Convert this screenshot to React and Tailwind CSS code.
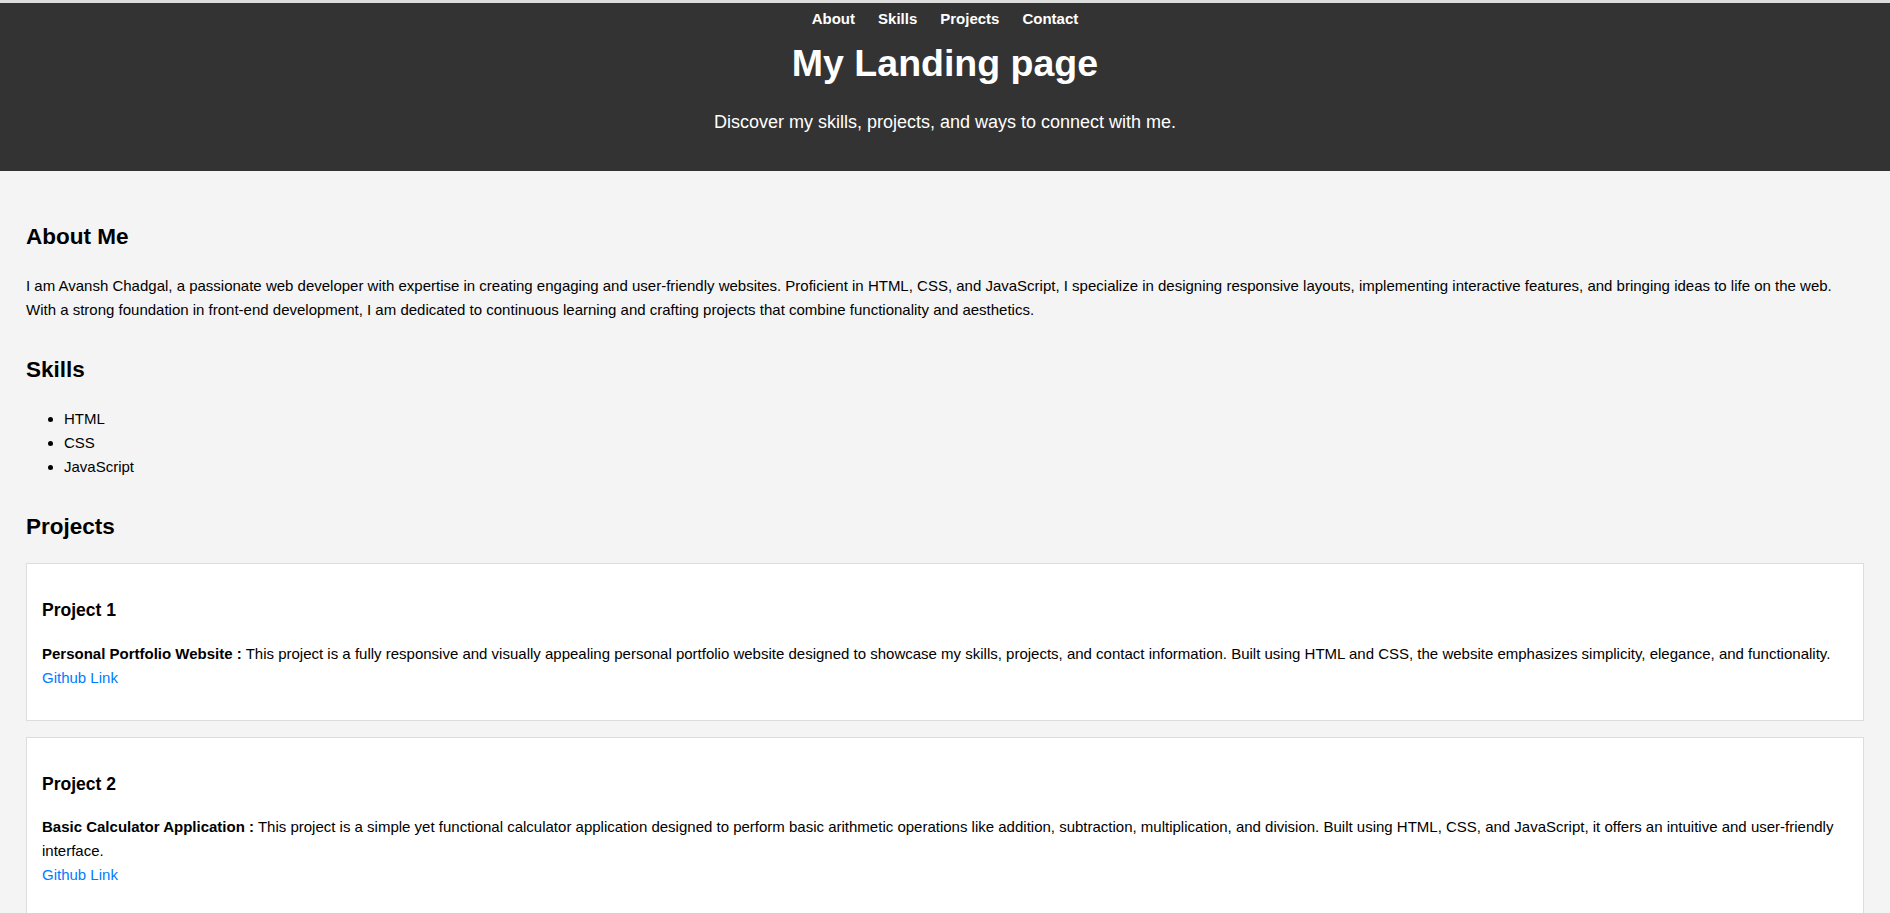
import React from 'react';

const navLinks = ['About', 'Skills', 'Projects', 'Contact'];

const skills = ['HTML', 'CSS', 'JavaScript'];

const projects = [
  {
    title: 'Project 1',
    name: 'Personal Portfolio Website',
    text: 'This project is a fully responsive and visually appealing personal portfolio website designed to showcase my skills, projects, and contact information. Built using HTML and CSS, the website emphasizes simplicity, elegance, and functionality.',
  },
  {
    title: 'Project 2',
    name: 'Basic Calculator Application',
    text: 'This project is a simple yet functional calculator application designed to perform basic arithmetic operations like addition, subtraction, multiplication, and division. Built using HTML, CSS, and JavaScript, it offers an intuitive and user-friendly interface.',
  },
];

export default function App() {
  return (
    <div className="min-h-screen bg-[#f4f4f4] text-black font-['Liberation_Sans',Arial,sans-serif]">
      <div className="h-[3px] bg-[#dedede]" />

      {/* Header */}
      <header className="bg-[#333333] text-white flex flex-col items-center pt-[6px] pb-[38px]">
        <nav className="flex gap-[23px] text-[15px] leading-[20px] font-bold">
          {navLinks.map((link) => (
            <a key={link} href={`#${link.toLowerCase()}`} className="text-white">
              {link}
            </a>
          ))}
        </nav>
        <h1 className="mt-[12px] text-[37.5px] leading-[44px] font-bold">My Landing page</h1>
        <p className="mt-[26px] text-[18px] leading-[22px]">
          Discover my skills, projects, and ways to connect with me.
        </p>
      </header>

      <main className="px-[26px] pt-[52px] pb-10">
        {/* About */}
        <section id="about">
          <h2 className="text-[22.5px] leading-[27px] font-bold">About Me</h2>
          <p className="mt-[24px] text-[15px] leading-[24px]">
            I am Avansh Chadgal, a passionate web developer with expertise in creating engaging and user-friendly websites. Proficient in HTML, CSS, and JavaScript, I specialize in designing responsive layouts, implementing interactive features, and bringing ideas to life on the web. With a strong foundation in front-end development, I am dedicated to continuous learning and crafting projects that combine functionality and aesthetics.
          </p>
        </section>

        {/* Skills */}
        <section id="skills" className="mt-[34px]">
          <h2 className="text-[22.5px] leading-[27px] font-bold">Skills</h2>
          <ul className="mt-[24px] pl-[38px] list-disc text-[15px] leading-[24px]">
            {skills.map((s) => (
              <li key={s}>{s}</li>
            ))}
          </ul>
        </section>

        {/* Projects */}
        <section id="projects" className="mt-[34px]">
          <h2 className="text-[22.5px] leading-[27px] font-bold">Projects</h2>
          <div className="mt-[23px] flex flex-col gap-[16px]">
            {projects.map((p) => (
              <div key={p.title} className="bg-white border border-[#dddddd] px-[15px] pt-[32px] pb-[30px]">
                <h3 className="text-[17.55px] leading-[28px] font-bold">{p.title}</h3>
                <p className="mt-[17.5px] text-[15px] leading-[24px]">
                  <strong>{p.name} :</strong> {p.text}
                  <br />
                  <a href="#" className="text-[#007bff]">Github Link</a>
                </p>
              </div>
            ))}
          </div>
        </section>
      </main>
    </div>
  );
}
